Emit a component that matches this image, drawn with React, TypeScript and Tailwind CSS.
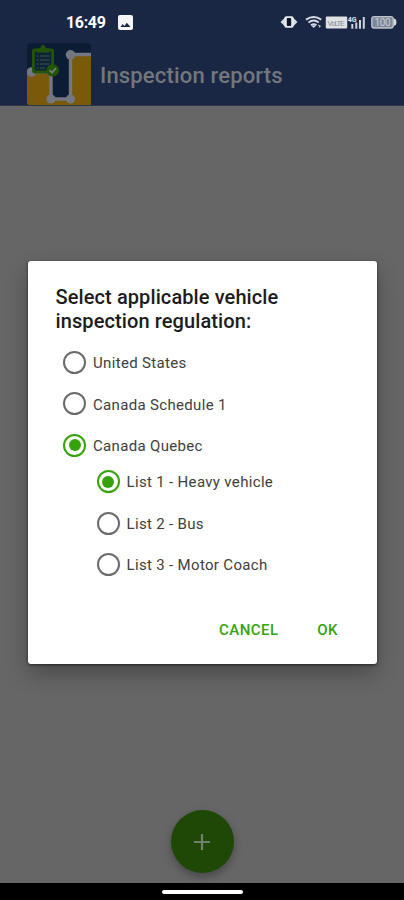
import React, { useState } from 'react'
import clsx from 'clsx'

type Option = { id: string; label: string }

const regulations: Option[] = [
  { id: 'us', label: 'United States' },
  { id: 'ca-1', label: 'Canada Schedule 1' },
  { id: 'ca-qc', label: 'Canada Quebec' },
]

const lists: Option[] = [
  { id: 'heavy', label: 'List 1 - Heavy vehicle' },
  { id: 'bus', label: 'List 2 - Bus' },
  { id: 'coach', label: 'List 3 - Motor Coach' },
]

function StatusIcons() {
  return (
    <svg width="120" height="20" viewBox="0 0 120 20" className="block">
      {/* vibrate */}
      <path d="M0.5 10l5-5v10zM17.5 10l-5-5v10z" fill="#d5dae3" />
      <rect x="4.4" y="4.2" width="9.2" height="11.6" rx="2" fill="#e8ebef" />
      <rect x="6.8" y="6" width="4.4" height="8" rx="0.8" fill="#0d1728" />
      {/* wifi */}
      <g fill="none" stroke="#d5dae3" strokeWidth="2">
        <path d="M26 7.6q7.7-5.2 15.2 0" />
        <path d="M28.5 10.5q5.2-3.8 10.2 0" />
        <path d="M31 13.3q2.8-2 5.4 0" />
      </g>
      <path d="M31.2 13.5h5l-2.5 2.6zM38 12.5l3 1.5-1.5 1.8z" fill="#d5dae3" />
      {/* volte */}
      <rect x="45.8" y="4.5" width="21.4" height="12" rx="1" fill="#dfe1e4" />
      <text x="47.5" y="13.5" fontSize="8" textLength="17" fill="#8a909c" fontFamily="Roboto, sans-serif">
        VoLTE
      </text>
      {/* signal */}
      <text x="67.8" y="9.6" fontSize="7" fontWeight="700" fill="#e1e4e9" fontFamily="Roboto, sans-serif">
        4G
      </text>
      <path
        d="M72.3 12v4.8M76.3 10.5v6.3M80 8v8.8M83.8 5v11.8"
        stroke="#cdd2db"
        strokeWidth="2"
      />
      {/* battery */}
      <rect x="91.8" y="4.6" width="21.4" height="11.4" rx="2.5" fill="#7d8797" stroke="#bcc3ce" strokeWidth="1.4" />
      <path d="M113.8 6.6q2.6 0 2.6 3.6t-2.6 3.6z" fill="#d5dae3" />
      <text x="94.5" y="13.9" fontSize="10" textLength="16" fill="#c5cbd5" fontFamily="Roboto, sans-serif">
        100
      </text>
    </svg>
  )
}

function Logo() {
  return (
    <svg width="64" height="62" viewBox="0 0 64 62" className="block shrink-0">
      <rect width="64" height="66" rx="4" fill="#0b1c35" />
      <path d="M0 30h23v27h20V12h21v50H2q-2 0-2-2z" fill="#785a0a" />
      <path d="M2 29h22v27h19.5V11.5H64" fill="none" stroke="#747680" strokeWidth="3.4" />
      <circle cx="4.5" cy="29" r="4.8" fill="#747680" />
      <circle cx="24" cy="56" r="4.6" fill="#747680" />
      <circle cx="43.5" cy="56" r="4.6" fill="#747680" />
      <circle cx="43.5" cy="11.8" r="4.8" fill="#747680" />
      {/* clipboard */}
      <rect x="6.4" y="7" width="19.2" height="22" rx="1.5" fill="#0d2434" stroke="#235408" strokeWidth="2.8" />
      <path d="M10 5.5h3q3-7.5 6 0h3V9.4H10z" fill="#235408" />
      <path
        d="M9.5 13h2M13 13h9.5M9.5 17h2M13 17h9.5M9.5 21h2M13 21h9.5M9.5 25h2M13 25h5"
        stroke="#3f5557"
        strokeWidth="1.2"
      />
      <circle cx="25.7" cy="27.4" r="6.2" fill="#235408" />
      <path d="M22.6 27.2l2.5 2.5 3.8-4.5" fill="none" stroke="#747b76" strokeWidth="1.8" />
    </svg>
  )
}

type RadioProps = {
  name: string
  option: Option
  checked: boolean
  onChange: (id: string) => void
}

function Radio({ name, option, checked, onChange }: RadioProps) {
  return (
    <label className="flex h-[41.6px] cursor-pointer items-center gap-[7px]">
      <input
        type="radio"
        name={name}
        checked={checked}
        onChange={() => onChange(option.id)}
        className="sr-only"
      />
      <span
        className={clsx(
          'flex size-[23px] shrink-0 items-center justify-center rounded-full border-2',
          checked ? 'border-[#36a30c]' : 'border-[#6a6a6a]',
        )}
      >
        {checked && <span className="size-[12px] rounded-full bg-[#36a30c]" />}
      </span>
      <span className="pt-[1.4px] text-[15px] leading-5 tracking-[0.33px] whitespace-nowrap text-[#404040]">
        {option.label}
      </span>
    </label>
  )
}

export default function App() {
  const [regulation, setRegulation] = useState('ca-qc')
  const [list, setList] = useState('heavy')

  return (
    <div className="relative flex h-[900px] w-[404px] flex-col overflow-hidden bg-[#666] font-['Roboto',sans-serif]">
      <header className="h-[106px] shrink-0 border-b border-[#2d3749] bg-[#1a2744]">
        <div className="flex h-[43px] items-start justify-between pt-3 pr-1 pl-[66px]">
          <div className="flex items-center gap-[13px] pt-px">
            <span className="text-[16px] leading-5 font-bold tracking-[-0.35px] text-white">16:49</span>
            <svg width="15" height="15" viewBox="0 0 15 15" className="-mt-px">
              <rect width="15" height="15" rx="2" fill="#f4f5f7" />
              <path d="M2.5 12l2.2-3 1.8 2 2.3-3.2L12.5 12z" fill="#1a2744" />
            </svg>
          </div>
          <StatusIcons />
        </div>
        <div className="flex pl-[27px]">
          <Logo />
          <h1 className="pt-[19px] pl-[9px] text-[22px] leading-7 font-medium tracking-[0.17px] whitespace-nowrap text-[#73777c]">
            Inspection reports
          </h1>
        </div>
      </header>

      <main className="flex flex-1 items-end justify-center pb-[10px]">
        <button
          aria-label="Add report"
          className="flex size-[63px] items-center justify-center rounded-full bg-[#1f4705] shadow-[0_4px_8px_rgba(0,0,0,0.3)]"
        >
          <svg width="18" height="18" viewBox="0 0 18 18">
            <path d="M9 1v16M1 9h16" stroke="#71806a" strokeWidth="2.2" />
          </svg>
        </button>
      </main>

      <nav className="flex h-[17px] shrink-0 justify-center bg-black pt-[7px]">
        <div className="h-1 w-[81px] rounded-full bg-white" />
      </nav>

      <div
        role="dialog"
        className="absolute top-[261px] left-[28px] flex h-[403px] w-[349px] flex-col rounded-[3px] bg-white px-[27px] pt-6 shadow-[0_10px_22px_rgba(0,0,0,0.28),0_1px_3px_rgba(0,0,0,0.55)]"
      >
        <h2 className="pl-[0.5px] text-[20px] leading-6 font-medium tracking-[0.1px] text-[#1c1c1c]">
          Select applicable vehicle
          <br />
          inspection regulation:
        </h2>
        <div className="pt-[8.5px] pl-2">
          {regulations.map((item) => (
            <Radio
              key={item.id}
              name="regulation"
              option={item}
              checked={regulation === item.id}
              onChange={setRegulation}
            />
          ))}
          <div className="-mt-[5.5px] pl-[33.5px]">
            {lists.map((item) => (
              <Radio key={item.id} name="list" option={item} checked={list === item.id} onChange={setList} />
            ))}
          </div>
        </div>
        <div className="mt-auto flex justify-end gap-[38.5px] pr-[12px] pb-6 text-[15px] leading-5 font-medium tracking-[0.5px] text-[#36a30c]">
          <button>CANCEL</button>
          <button>OK</button>
        </div>
      </div>
    </div>
  )
}
